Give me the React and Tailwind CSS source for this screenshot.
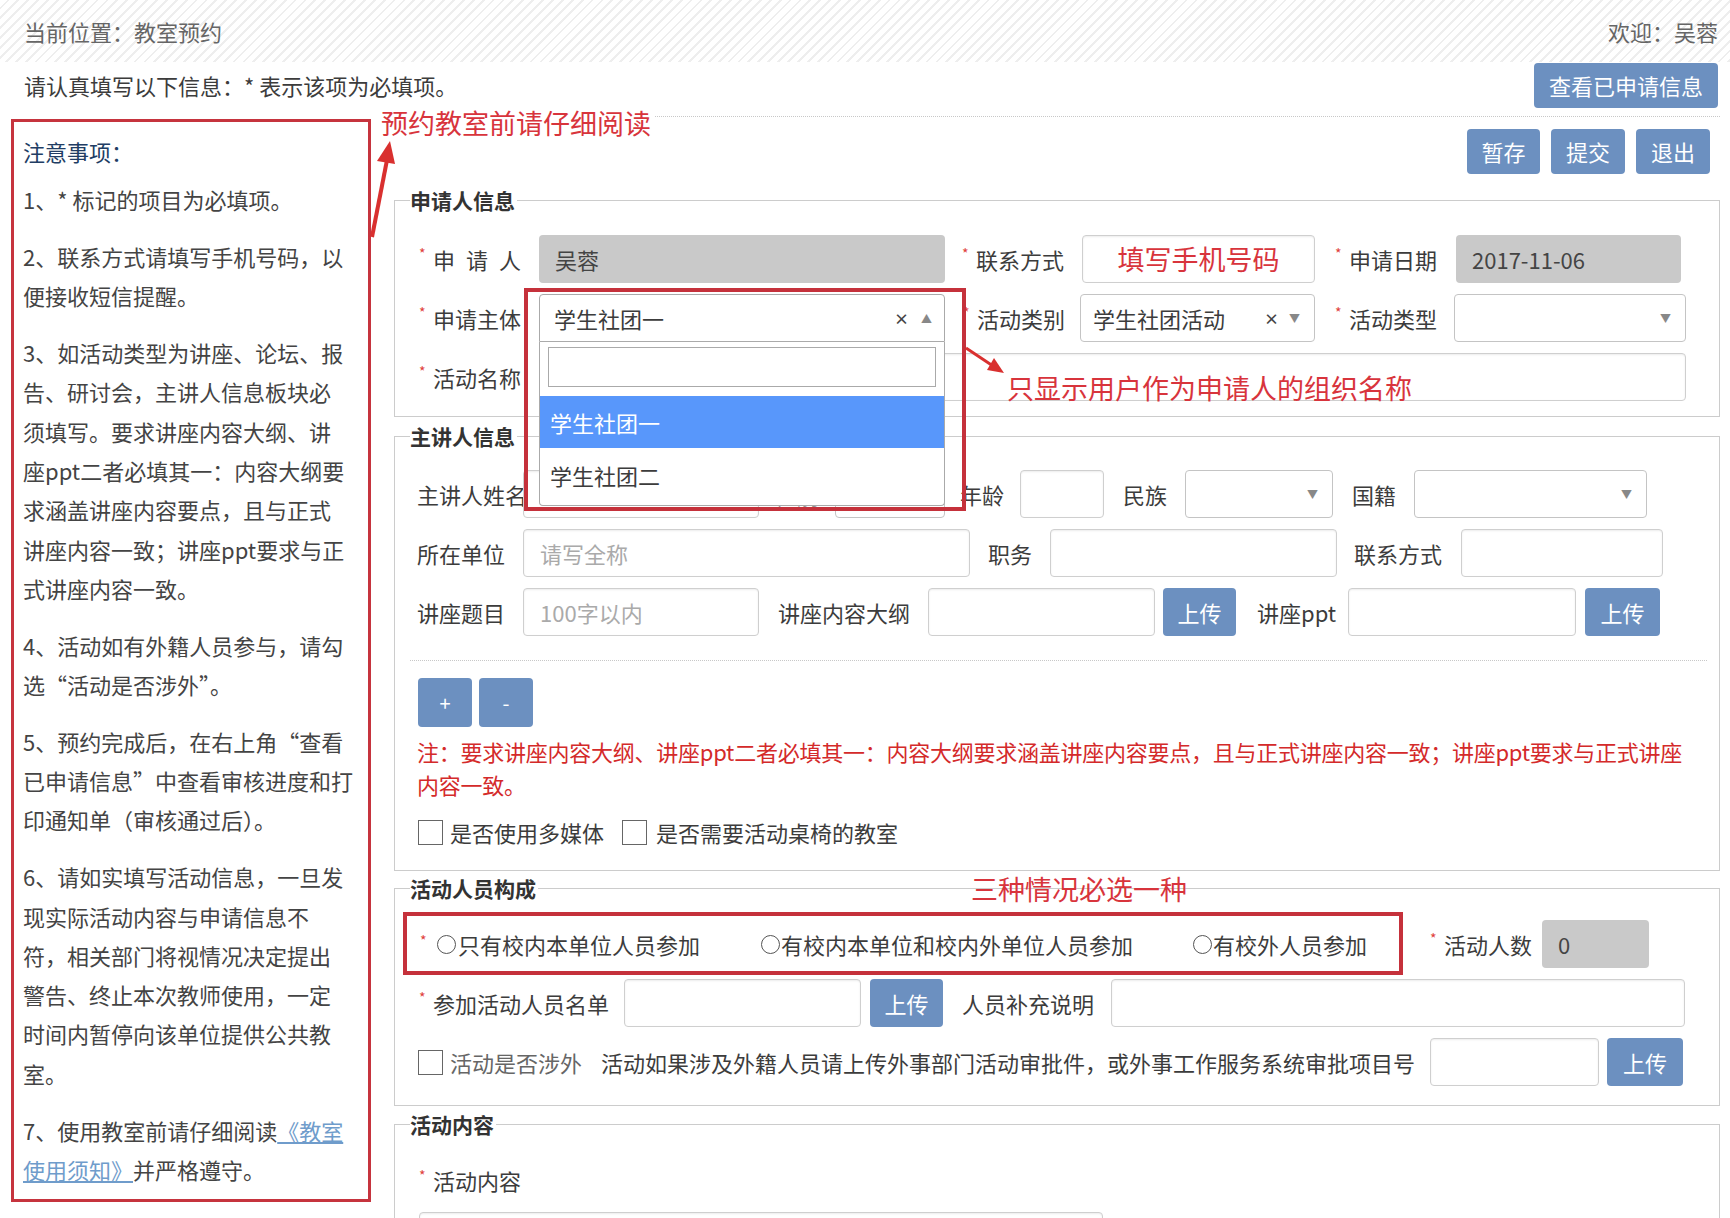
import React from 'react';

const RED = 'text-[#d8343c]';

function Star() {
  return (
    <span className="relative -top-[6px] inline-block w-[14px] text-[14px] leading-none text-[#e0403a]">*</span>
  );
}

function Label({ className = '', star, children }) {
  return (
    <div className={`flex shrink-0 items-center whitespace-nowrap ${className}`}>
      {star && <Star />}
      <span>{children}</span>
    </div>
  );
}

function Input({ className = '', gray, placeholder, children }) {
  return (
    <div
      className={`flex h-[48px] shrink-0 items-center rounded-[4px] px-[16px] whitespace-nowrap ${
        gray
          ? 'bg-[#c9c9c9] text-[#444]'
          : 'border border-[#cfcfcf] bg-white shadow-[inset_0_1px_2px_rgba(0,0,0,0.08)]'
      } ${className}`}
    >
      {placeholder ? <span className="text-[#aaaaaa]">{placeholder}</span> : children}
    </div>
  );
}

function Select({ className = '', value, clear }) {
  return (
    <div
      className={`flex h-[48px] shrink-0 items-center rounded-[4px] border border-[#c4c4c4] bg-white pl-[12px] pr-[14px] ${className}`}
    >
      <span className="flex-1 whitespace-nowrap">{value}</span>
      {clear && <span className="mr-[10px] text-[15px] font-bold leading-none text-[#444]">×</span>}
      <span className="text-[11px] leading-none text-[#888]">▼</span>
    </div>
  );
}

function Btn({ className = '', children }) {
  return (
    <div
      className={`flex shrink-0 items-center justify-center rounded-[4px] bg-[#6c90c0] text-white ${className}`}
    >
      {children}
    </div>
  );
}

function Box() {
  return <span className="inline-block h-[25px] w-[25px] shrink-0 border border-[#666] bg-white" />;
}

function Radio() {
  return <span className="inline-block h-[19px] w-[19px] shrink-0 rounded-full border border-[#555] bg-white" />;
}

function Group({ title, className = '', children }) {
  return (
    <fieldset className={`border border-[#cccccc] ${className}`}>
      <legend className="ml-[15px] pr-[2px] text-[21px] font-bold leading-[28px] text-[#333]">{title}</legend>
      {children}
    </fieldset>
  );
}

const notes = [
  ['1、* 标记的项目为必填项。'],
  ['2、联系方式请填写手机号码，以', '便接收短信提醒。'],
  [
    '3、如活动类型为讲座、论坛、报',
    '告、研讨会，主讲人信息板块必',
    '须填写。要求讲座内容大纲、讲',
    '座ppt二者必填其一：内容大纲要',
    '求涵盖讲座内容要点，且与正式',
    '讲座内容一致；讲座ppt要求与正',
    '式讲座内容一致。',
  ],
  ['4、活动如有外籍人员参与，请勾', '选“活动是否涉外”。'],
  ['5、预约完成后，在右上角“查看', '已申请信息”中查看审核进度和打', '印通知单（审核通过后）。'],
  [
    '6、请如实填写活动信息，一旦发',
    '现实际活动内容与申请信息不',
    '符，相关部门将视情况决定提出',
    '警告、终止本次教师使用，一定',
    '时间内暂停向该单位提供公共教',
    '室。',
  ],
];

export default function App() {
  return (
    <div className="relative h-[1218px] w-[1730px] overflow-hidden bg-white font-['Noto_Sans_CJK_SC','Noto_Sans',sans-serif] text-[22px] text-[#3c3c3c]">
      {/* top bar */}
      <div className="flex h-[62px] items-center justify-between bg-[image:repeating-linear-gradient(135deg,#ffffff_0px,#ffffff_5px,#eeeeee_5px,#eeeeee_7px)] pl-[24px] pr-[12px] text-[#666]">
        <span>当前位置：教室预约</span>
        <span>欢迎：吴蓉</span>
      </div>
      <div className="flex h-[54px] items-start justify-between pl-[24px] pr-[12px] pt-[1px]">
        <span className="leading-[45px]">请认真填写以下信息：* 表示该项为必填项。</span>
        <Btn className="h-[45px] w-[184px]">查看已申请信息</Btn>
      </div>

      <div className="flex">
        {/* notes */}
        <div className="ml-[11px] mt-[3px] h-[1083px] w-[360px] shrink-0 border-[3px] border-[#c6343e] px-[9px] pt-[10px] leading-[39.3px] whitespace-nowrap text-[#444]">
          <div className="mb-[9px] text-[#213d64]">注意事项：</div>
          {notes.map((p, i) => (
            <div key={i} className={i ? 'mt-[17.5px]' : ''}>
              {p.map((l) => (
                <div key={l}>{l}</div>
              ))}
            </div>
          ))}
          <div className="mt-[17.5px]">
            <div>
              7、使用教室前请仔细阅读<span className="text-[#6f9ccb] underline">《教室</span>
            </div>
            <div>
              <span className="text-[#6f9ccb] underline">使用须知》</span>并严格遵守。
            </div>
          </div>
        </div>

        {/* form */}
        <div className="ml-[9px] w-[1340px] shrink-0 border-t border-dotted border-[#c8c8c8] pl-[14px]">
          <div className="mt-[12px] flex justify-end gap-[11px] pr-[10px]">
            <Btn className="h-[45px] w-[73px]">暂存</Btn>
            <Btn className="h-[45px] w-[74px]">提交</Btn>
            <Btn className="h-[45px] w-[74px]">退出</Btn>
          </div>

          <Group title="申请人信息" className="mt-[12px] pb-[15px] pt-[21px]">
            <div className="flex flex-col gap-[11px]">
              <div className="flex h-[48px] items-center">
                <Label star className="ml-[24px] w-[120px]">
                  <span className="tracking-[11px]">申请人</span>
                </Label>
                <Input gray className="w-[406px]">吴蓉</Input>
                <Label star className="ml-[17px] w-[120px]">联系方式</Label>
                <Input className="w-[233px] justify-center">
                  <span className={`text-[27px] ${RED}`}>填写手机号码</span>
                </Input>
                <Label star className="ml-[20px] w-[121px]">申请日期</Label>
                <Input gray className="w-[225px]">2017-11-06</Input>
              </div>

              <div className="flex h-[48px] items-center">
                <Label star className="ml-[24px] w-[120px]">申请主体</Label>
                <div className="relative w-[406px] shrink-0">
                  <div className="flex h-[48px] items-center rounded-t-[4px] border border-[#aaaaaa] bg-white pl-[14px] pr-[12px]">
                    <span className="flex-1">学生社团一</span>
                    <span className="mr-[12px] text-[15px] font-bold leading-none text-[#444]">×</span>
                    <span className="text-[11px] leading-none text-[#888]">▲</span>
                  </div>
                  <div className="absolute left-0 top-full z-20 w-full rounded-b-[4px] border border-t-0 border-[#aaaaaa] bg-white py-[5px]">
                    <div className="mx-[8px] h-[40px] border border-[#aaaaaa]" />
                    <div className="mt-[9px] flex h-[52px] items-center bg-[#5897fb] pl-[10px] text-white">学生社团一</div>
                    <div className="mt-[3px] flex h-[49px] items-center pl-[10px]">学生社团二</div>
                  </div>
                  <div className="pointer-events-none absolute -left-[15px] -top-[6px] z-30 h-[223px] w-[442px] border-[4px] border-[#c5313b]" />
                </div>
                <Label star className="ml-[18px] w-[117px]">活动类别</Label>
                <Select className="w-[235px]" value="学生社团活动" clear />
                <Label star className="ml-[20px] w-[119px]">活动类型</Label>
                <Select className="w-[232px]" />
              </div>

              <div className="flex h-[48px] items-center">
                <Label star className="ml-[24px] w-[120px]">活动名称</Label>
                <Input className="w-[1147px]" />
              </div>
            </div>
          </Group>

          <Group title="主讲人信息" className="mt-[5px] pb-[21px] pt-[20px]">
            <div className="flex flex-col gap-[11px]">
              <div className="flex h-[48px] items-center">
                <Label className="ml-[22px] w-[106px]">主讲人姓名</Label>
                <Input className="w-[236px]" />
                <Label className="ml-[16px] w-[60px]">性别</Label>
                <Select className="w-[110px]" />
                <Label className="ml-[15px] w-[60px]">年龄</Label>
                <Input className="w-[84px]" />
                <Label className="ml-[19px] w-[62px]">民族</Label>
                <Select className="w-[148px]" />
                <Label className="ml-[19px] w-[62px]">国籍</Label>
                <Select className="w-[233px]" />
              </div>
              <div className="flex h-[48px] items-center">
                <Label className="ml-[22px] w-[106px]">所在单位</Label>
                <Input className="w-[447px]" placeholder="请写全称" />
                <Label className="ml-[18px] w-[62px]">职务</Label>
                <Input className="w-[287px]" />
                <Label className="ml-[17px] w-[107px]">联系方式</Label>
                <Input className="w-[202px]" />
              </div>
              <div className="flex h-[48px] items-center">
                <Label className="ml-[22px] w-[106px]">讲座题目</Label>
                <Input className="w-[236px]" placeholder="100字以内" />
                <Label className="ml-[19px] w-[150px]">讲座内容大纲</Label>
                <Input className="w-[227px]" />
                <Btn className="ml-[8px] h-[48px] w-[73px]">上传</Btn>
                <Label className="ml-[21px] w-[91px]">讲座ppt</Label>
                <Input className="w-[228px]" />
                <Btn className="ml-[9px] h-[48px] w-[75px]">上传</Btn>
              </div>
            </div>
            <div className="ml-[15px] mr-[12px] mt-[24px] border-t border-dotted border-[#c8c8c8]" />
            <div className="ml-[23px] mt-[17px] flex gap-[7px]">
              <Btn className="h-[49px] w-[54px] text-[20px]">+</Btn>
              <Btn className="h-[49px] w-[54px] text-[20px]">-</Btn>
            </div>
            <div className="ml-[22px] mt-[8px] whitespace-nowrap leading-[33px] tracking-[-0.25px] text-[#d42a2a]">
              <div>注：要求讲座内容大纲、讲座ppt二者必填其一：内容大纲要求涵盖讲座内容要点，且与正式讲座内容一致；讲座ppt要求与正式讲座</div>
              <div>内容一致。</div>
            </div>
            <div className="ml-[23px] mt-[15px] flex h-[33px] items-center whitespace-nowrap">
              <Box />
              <span className="ml-[7px]">是否使用多媒体</span>
              <span className="ml-[18px] flex">
                <Box />
              </span>
              <span className="ml-[9px]">是否需要活动桌椅的教室</span>
            </div>
          </Group>

          <Group title="活动人员构成" className="mt-[3px] pb-[19px] pt-[18px]">
            <div className="flex flex-col gap-[11px]">
              <div className="relative flex h-[48px] items-center whitespace-nowrap">
                <div className="pointer-events-none absolute left-[8px] -top-[8px] h-[63px] w-[1000px] border-[4px] border-[#c5313b]" />
                <div className="ml-[25px] flex w-[341px] shrink-0 items-center">
                  <span className="relative -top-[4px] inline-block w-[17px] text-[14px] leading-none text-[#e0403a]">*</span>
                  <Radio />
                  <span className="ml-[2px]">只有校内本单位人员参加</span>
                </div>
                <div className="flex w-[432px] shrink-0 items-center">
                  <Radio />
                  <span className="ml-[1px]">有校内本单位和校内外单位人员参加</span>
                </div>
                <div className="flex w-[237px] shrink-0 items-center">
                  <Radio />
                  <span className="ml-[1px]">有校外人员参加</span>
                </div>
                <Label star className="w-[112px]">活动人数</Label>
                <Input gray className="w-[107px]">0</Input>
              </div>

              <div className="flex h-[48px] items-center">
                <Label star className="ml-[24px] w-[205px]">参加活动人员名单</Label>
                <Input className="w-[237px]" />
                <Btn className="ml-[9px] h-[48px] w-[73px]">上传</Btn>
                <Label className="ml-[19px] w-[149px]">人员补充说明</Label>
                <Input className="w-[574px]" />
              </div>

              <div className="flex h-[48px] items-center whitespace-nowrap">
                <span className="ml-[23px] flex">
                  <Box />
                </span>
                <span className="ml-[7px] w-[151px] shrink-0 text-[#666]">活动是否涉外</span>
                <span className="w-[829px] shrink-0">活动如果涉及外籍人员请上传外事部门活动审批件，或外事工作服务系统审批项目号</span>
                <Input className="w-[169px]" />
                <Btn className="ml-[8px] h-[48px] w-[76px]">上传</Btn>
              </div>
            </div>
          </Group>

          <Group title="活动内容" className="mt-[4px] h-[300px] pt-[26px]">
            <Label star className="ml-[24px] leading-[33px]">活动内容</Label>
            <Input className="ml-[24px] mt-[15px] w-[684px]" />
          </Group>
        </div>
      </div>

      {/* annotations */}
      <div className={`absolute left-[378px] top-[106px] bg-white px-[3px] text-[27px] leading-[34px] ${RED}`}>
        预约教室前请仔细阅读
      </div>
      <svg className="absolute left-[355px] top-[130px]" width="50" height="115" viewBox="0 0 50 115">
        <line x1="17" y1="107" x2="32" y2="30" stroke="#d9302f" strokeWidth="4" />
        <polygon points="35,11 22,31 40,34" fill="#d9302f" />
      </svg>

      <svg className="absolute left-[960px] top-[340px] z-40" width="50" height="40" viewBox="0 0 50 40">
        <line x1="6" y1="8" x2="33" y2="26" stroke="#d9302f" strokeWidth="3" />
        <polygon points="44,33 27,30 34,18" fill="#d9302f" />
      </svg>
      <div className={`absolute left-[1007px] top-[371px] text-[27px] leading-[34px] ${RED}`}>
        只显示用户作为申请人的组织名称
      </div>

      <div className={`absolute left-[971px] top-[872px] text-[27px] leading-[34px] ${RED}`}>三种情况必选一种</div>
    </div>
  );
}
